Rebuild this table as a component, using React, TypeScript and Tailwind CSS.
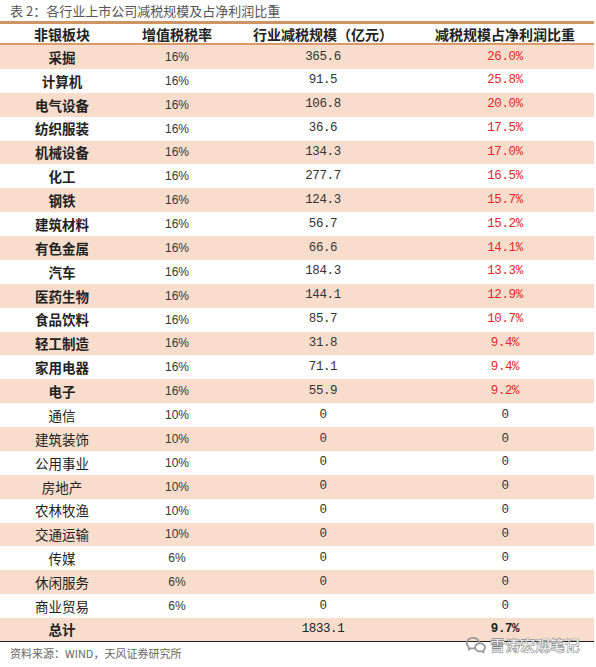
import { RiWechatLine } from "react-icons/ri";

type Row = { name: string; rate: string; amount: string; share: string; bold?: boolean };

const rows: Row[] = [
  { name: "采掘", rate: "16%", amount: "365.6", share: "26.0%", bold: true },
  { name: "计算机", rate: "16%", amount: "91.5", share: "25.8%", bold: true },
  { name: "电气设备", rate: "16%", amount: "106.8", share: "20.0%", bold: true },
  { name: "纺织服装", rate: "16%", amount: "36.6", share: "17.5%", bold: true },
  { name: "机械设备", rate: "16%", amount: "134.3", share: "17.0%", bold: true },
  { name: "化工", rate: "16%", amount: "277.7", share: "16.5%", bold: true },
  { name: "钢铁", rate: "16%", amount: "124.3", share: "15.7%", bold: true },
  { name: "建筑材料", rate: "16%", amount: "56.7", share: "15.2%", bold: true },
  { name: "有色金属", rate: "16%", amount: "66.6", share: "14.1%", bold: true },
  { name: "汽车", rate: "16%", amount: "184.3", share: "13.3%", bold: true },
  { name: "医药生物", rate: "16%", amount: "144.1", share: "12.9%", bold: true },
  { name: "食品饮料", rate: "16%", amount: "85.7", share: "10.7%", bold: true },
  { name: "轻工制造", rate: "16%", amount: "31.8", share: "9.4%", bold: true },
  { name: "家用电器", rate: "16%", amount: "71.1", share: "9.4%", bold: true },
  { name: "电子", rate: "16%", amount: "55.9", share: "9.2%", bold: true },
  { name: "通信", rate: "10%", amount: "0", share: "0" },
  { name: "建筑装饰", rate: "10%", amount: "0", share: "0" },
  { name: "公用事业", rate: "10%", amount: "0", share: "0" },
  { name: "房地产", rate: "10%", amount: "0", share: "0" },
  { name: "农林牧渔", rate: "10%", amount: "0", share: "0" },
  { name: "交通运输", rate: "10%", amount: "0", share: "0" },
  { name: "传媒", rate: "6%", amount: "0", share: "0" },
  { name: "休闲服务", rate: "6%", amount: "0", share: "0" },
  { name: "商业贸易", rate: "6%", amount: "0", share: "0" },
];

const cjk = "font-['Noto_Sans_CJK_SC',sans-serif]";
const mono = "font-['Liberation_Mono','Noto_Sans_CJK_SC',monospace]";
const grid = "grid grid-cols-[124px_106px_186px_178px] items-center";

export default function App() {
  return (
    <div className="relative w-[596px] h-[667px] bg-white overflow-hidden">
      {/* Title */}
      <div className={`${cjk} pl-[10px] pt-[2px] text-[13px] leading-[18px] text-[#555]`}>
        表 2：各行业上市公司减税规模及占净利润比重
      </div>

      {/* Table */}
      <div className="mt-[1px] w-[594px] border-t-[3px] border-[#cf9463]">
        <div className={`${grid} ${cjk} h-[21px] border-b-2 border-[#d99a68] text-[14px] font-bold text-[#222] text-center`}>
          <div>非银板块</div>
          <div>增值税税率</div>
          <div>行业减税规模（亿元）</div>
          <div>减税规模占净利润比重</div>
        </div>

        {rows.map((r, i) => (
          <div
            key={r.name}
            className={`${grid} h-[23.88px] text-center ${i % 2 === 0 ? "bg-[#f9ddcc]" : "bg-white"}`}
          >
            <div className={`${cjk} text-[13.5px] text-[#222] ${r.bold ? "font-bold" : ""}`}>{r.name}</div>
            <div className="font-['Liberation_Sans',sans-serif] text-[12px] text-[#2f3a2f]">{r.rate}</div>
            <div className={`${mono} text-[12.5px] tracking-[-0.4px] text-[#333]`}>{r.amount}</div>
            <div className={`${mono} text-[12.5px] tracking-[-0.4px] ${r.bold ? "text-[#e3262a]" : "text-[#333]"}`}>
              {r.share}
            </div>
          </div>
        ))}

        <div className={`${grid} h-[23.88px] text-center bg-[#f9ddcc] border-b border-[#222]`}>
          <div className={`${cjk} text-[13.5px] font-bold text-[#222]`}>总计</div>
          <div />
          <div className={`${mono} text-[12.5px] tracking-[-0.4px] text-[#222]`}>1833.1</div>
          <div className={`${mono} text-[12.5px] tracking-[-0.4px] font-bold text-[#222]`}>9.7%</div>
        </div>
      </div>

      {/* Source */}
      <div className={`${cjk} pl-[10px] pt-[3px] text-[11px] leading-[16px] text-[#666]`}>
        资料来源：WIND，天风证券研究所
      </div>

      {/* Watermark */}
      <div className="absolute left-[465px] top-[634px] flex items-center gap-[3px]">
        <RiWechatLine className="w-[22px] h-[22px] text-[#9a9a9a]" />
        <span className={`${cjk} text-[15px] leading-[20px] text-white font-bold [-webkit-text-stroke:0.6px_#8a8a8a]`}>
          雪涛宏观笔记
        </span>
      </div>
    </div>
  );
}
